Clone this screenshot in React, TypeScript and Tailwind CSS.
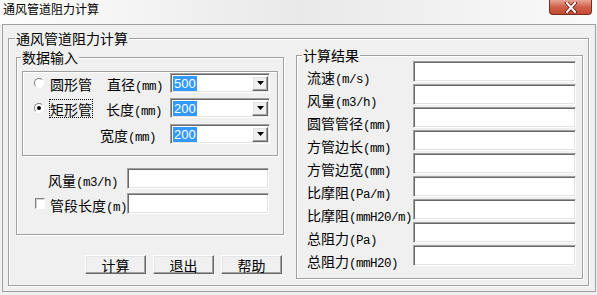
import React from "react";

const sunken =
  "bg-white border border-t-[#a0a0a0] border-l-[#a0a0a0] border-r-white border-b-white shadow-[inset_1px_1px_0_#696969,inset_-1px_-1px_0_#e3e3e3]";
const raised =
  "bg-[#f0f0f0] border border-t-white border-l-white border-r-[#696969] border-b-[#696969] shadow-[inset_-1px_-1px_0_#a0a0a0,inset_1px_1px_0_#e3e3e3]";
const etched = "border border-[#a0a0a0] shadow-[inset_1px_1px_0_#fff,1px_1px_0_#fff]";

function Lbl({ zh, en }: { zh: string; en?: string }) {
  return (
    <span className="whitespace-nowrap text-[14px] leading-[16px] text-black">
      {zh}
      {en ? (
        <span className="font-['Liberation_Mono',monospace] text-[12.5px] tracking-[-0.5px]">{en}</span>
      ) : null}
    </span>
  );
}

function Radio({ checked }: { checked?: boolean }) {
  return (
    <div className="w-[10px] h-[10px] rounded-full bg-white border border-t-[#808080] border-l-[#808080] border-r-white border-b-white flex items-center justify-center shrink-0">
      {checked ? <div className="w-[4px] h-[4px] rounded-full bg-black" /> : null}
    </div>
  );
}

function Combo({ value }: { value: string }) {
  return (
    <div className={`${sunken} w-[100px] h-[20px] flex items-center justify-between pl-[2px] pr-[1px]`}>
      <span className="bg-[#3399ff] text-white font-['Liberation_Sans',sans-serif] text-[13px] leading-[15px] px-[1px]">
        {value}
      </span>
      <div className={`${raised} w-[16px] h-[15px] flex items-center justify-center`}>
        <svg width="7" height="4" viewBox="0 0 7 4">
          <polygon points="0,0 7,0 3.5,4" fill="#000" />
        </svg>
      </div>
    </div>
  );
}

function Btn({ text }: { text: string }) {
  return (
    <div className={`${raised} w-[61px] h-[19px] flex items-center justify-center`}>
      <Lbl zh={text} />
    </div>
  );
}

const results: [string, string][] = [
  ["流速", "(m/s)"],
  ["风量", "(m3/h)"],
  ["圆管管径", "(mm)"],
  ["方管边长", "(mm)"],
  ["方管边宽", "(mm)"],
  ["比摩阻", "(Pa/m)"],
  ["比摩阻", "(mmH20/m)"],
  ["总阻力", "(Pa)"],
  ["总阻力", "(mmH20)"],
];

export default function App() {
  return (
    <div className="w-[597px] h-[295px] overflow-hidden bg-[#f0f0f0] font-['Noto_Sans_CJK_SC',sans-serif] text-black">
      {/* title bar */}
      <div className="h-[24px] flex items-start justify-between bg-linear-to-r from-[#fdfdfd] via-[#e9e9e9] to-[#fafafa]">
        <div className="pl-[3px] pt-[2px] text-[12px] leading-[14px]">通风管道阻力计算</div>
        <div className="mr-[5px] w-[43px] h-[15px] rounded-b-[4px] border border-t-0 border-[#7a2a1e] bg-linear-to-b from-[#e8a595] via-[#d0604a] to-[#c24a32] flex items-center justify-center">
          <svg width="14" height="11" viewBox="0 0 14 11">
            <path d="M3 1 L11 10 M11 1 L3 10" stroke="#5a1a10" strokeWidth="3.6" strokeLinecap="square" />
            <path d="M3 1 L11 10 M11 1 L3 10" stroke="#fff" strokeWidth="2" strokeLinecap="square" />
          </svg>
        </div>
      </div>
      {/* body */}
      <div className="h-[271px] pl-[2px]">
        <div className="w-[594px] h-[268px] border border-[#a0a0a0]">
          <div className={`${etched} relative ml-[5px] mt-[13px] w-[581px] h-[248px]`}>
            <div className="absolute left-[6px] top-[-9px] px-[1px] bg-[#f0f0f0] text-[14px] leading-[16px]">
              通风管道阻力计算
            </div>
            <div className="flex pl-[7px]">
              {/* left column */}
              <div className="pt-[18px] w-[268px]">
                <div className={`${etched} relative w-[268px] h-[178px]`}>
                  <div className="absolute left-[4px] top-[-9px] px-[1px] bg-[#f0f0f0] text-[14px] leading-[16px]">
                    数据输入
                  </div>
                  <div className={`${etched} ml-[5px] mt-[13px] w-[256px] h-[85px] pt-[1px] flex flex-col`}>
                    <div className="flex items-center h-[20px] pl-[11px]">
                      <Radio />
                      <div className="ml-[6px] w-[50px]">
                        <Lbl zh="圆形管" />
                      </div>
                      <div className="w-[70px] pl-[7px]">
                        <Lbl zh="直径" en="(mm)" />
                      </div>
                      <Combo value="500" />
                    </div>
                    <div className="flex items-center h-[20px] pl-[11px] mt-[5px]">
                      <Radio checked />
                      <div className="ml-[6px] w-[50px] flex">
                        <span className="outline outline-1 outline-dotted outline-black leading-[16px]">
                          <Lbl zh="矩形管" />
                        </span>
                      </div>
                      <div className="w-[70px] pl-[6px]">
                        <Lbl zh="长度" en="(mm)" />
                      </div>
                      <Combo value="200" />
                    </div>
                    <div className="flex items-center h-[20px] pl-[11px] mt-[6px]">
                      <div className="w-[10px]" />
                      <div className="ml-[6px] w-[50px]" />
                      <div className="w-[70px]">
                        <Lbl zh="宽度" en="(mm)" />
                      </div>
                      <Combo value="200" />
                    </div>
                  </div>
                  <div className="mt-[12px] flex items-center h-[21px]">
                    <div className="w-[110px] pr-[9px] text-right">
                      <Lbl zh="风量" en="(m3/h)" />
                    </div>
                    <div className={`${sunken} w-[142px] h-[21px]`} />
                  </div>
                  <div className="mt-[4px] flex items-center h-[21px]">
                    <div className="w-[110px] pl-[18px] flex items-center">
                      <div className="w-[11px] h-[11px] bg-white border border-t-[#808080] border-l-[#808080] border-r-white border-b-white shadow-[inset_1px_1px_0_#d4d4d4]" />
                      <div className="ml-[5px]">
                        <Lbl zh="管段长度" en="(m)" />
                      </div>
                    </div>
                    <div className={`${sunken} w-[142px] h-[21px]`} />
                  </div>
                </div>
                <div className="mt-[20px] pl-[69px] flex gap-[7px]">
                  <Btn text="计算" />
                  <Btn text="退出" />
                  <Btn text="帮助" />
                </div>
              </div>
              {/* right column */}
              <div className="ml-[12px] pt-[16px]">
                <div className={`${etched} relative w-[287px] h-[224px]`}>
                  <div className="absolute left-[5px] top-[-9px] px-[1px] bg-[#f0f0f0] text-[14px] leading-[16px]">
                    计算结果
                  </div>
                  <div className="pt-[5px] pl-[10px] flex flex-col gap-[2px]">
                    {results.map(([zh, en], i) => (
                      <div key={i} className="flex items-center h-[21px]">
                        <div className="w-[106px] mt-[9px]">
                          <Lbl zh={zh} en={en} />
                        </div>
                        <div className={`${sunken} w-[163px] h-[21px]`} />
                      </div>
                    ))}
                  </div>
                </div>
              </div>
            </div>
          </div>
        </div>
      </div>
    </div>
  );
}
